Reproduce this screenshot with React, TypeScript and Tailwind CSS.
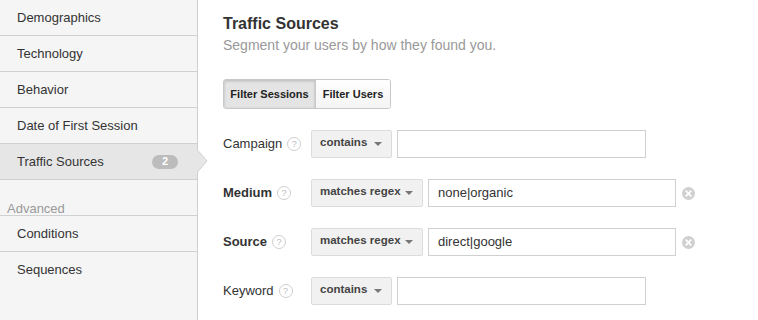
import React from "react";

interface NavItem {
  label: string;
  badge?: string;
  selected?: boolean;
}

const mainItems: NavItem[] = [
  { label: "Demographics" },
  { label: "Technology" },
  { label: "Behavior" },
  { label: "Date of First Session" },
  { label: "Traffic Sources", badge: "2", selected: true },
];

const advancedItems: NavItem[] = [{ label: "Conditions" }, { label: "Sequences" }];

interface FilterRow {
  label: string;
  bold?: boolean;
  op: string;
  value: string;
}

const rows: FilterRow[] = [
  { label: "Campaign", op: "contains", value: "" },
  { label: "Medium", bold: true, op: "matches regex", value: "none|organic" },
  { label: "Source", bold: true, op: "matches regex", value: "direct|google" },
  { label: "Keyword", op: "contains", value: "" },
];

const HelpIcon = () => (
  <span className="inline-flex h-[14px] w-[14px] items-center justify-center rounded-full border border-[#cfcfcf] text-[9px] leading-none text-[#bbb]">
    ?
  </span>
);

const ClearIcon = () => (
  <svg width="13" height="13" viewBox="0 0 13 13">
    <circle cx="6.5" cy="6.5" r="6.5" fill="#d0d0d0" />
    <path d="M4.2 4.2 L8.8 8.8 M8.8 4.2 L4.2 8.8" stroke="#fff" strokeWidth="1.8" strokeLinecap="round" />
  </svg>
);

const SideRow = ({ item, last }: { item: NavItem; last?: boolean }) => (
  <div
    className={`relative flex h-[36px] items-center justify-between pl-[17px] pr-[19px] text-[13px] text-[#333] ${
      last ? "" : "border-b border-[#d0d0d0]"
    } ${item.selected ? "bg-[#e6e6e6]" : ""}`}
  >
    <span>{item.label}</span>
    {item.badge && (
      <span className="flex h-[14px] w-[26px] items-center justify-center rounded-full bg-[#bcbcbc] text-[11px] font-bold leading-none text-white">
        {item.badge}
      </span>
    )}
    {item.selected && (
      <svg className="absolute right-[-11px] top-[6px]" width="11" height="22" viewBox="0 0 11 22">
        <path d="M0 0 L10 11 L0 22 Z" fill="#e6e6e6" />
        <path d="M0.5 0 L10 11 L0.5 22" fill="none" stroke="#cfcfcf" strokeWidth="1" />
      </svg>
    )}
  </div>
);

export default function App() {
  return (
    <div className="flex h-[320px] w-[758px] overflow-hidden bg-white font-['Liberation_Sans',Arial,sans-serif]">
      <div className="w-[198px] shrink-0 border-r border-[#d0d0d0] bg-[#f5f5f5]">
        {mainItems.map((item) => (
          <SideRow key={item.label} item={item} />
        ))}
        <div className="flex h-[36px] items-end border-b border-[#d0d0d0] pb-0 pl-[7px] text-[13px] leading-[13px] text-[#999]">
          Advanced
        </div>
        {advancedItems.map((item, i) => (
          <SideRow key={item.label} item={item} last={i === advancedItems.length - 1} />
        ))}
      </div>

      <div className="flex-1 pl-[25px] pt-[14px]">
        <h1 className="text-[16px] font-bold leading-[20px] text-[#333]">Traffic Sources</h1>
        <p className="mt-[2px] text-[14px] leading-[18px] text-[#999]">Segment your users by how they found you.</p>

        <div className="mt-[25px] inline-flex h-[30px] rounded-[3px] border border-[#c8c8c8] text-[11px] font-bold text-[#222]">
          <button className="w-[92px] rounded-l-[2px] border-r border-[#c8c8c8] bg-[#e4e4e4] shadow-[inset_0_1px_3px_rgba(0,0,0,0.2)]">
            Filter Sessions
          </button>
          <button className="w-[74px] rounded-r-[2px] bg-gradient-to-b from-white to-[#f4f4f4]">Filter Users</button>
        </div>

        <div className="mt-[21px] flex flex-col gap-[21px]">
          {rows.map((r) => (
            <div key={r.label} className="flex h-[28px] items-center">
              <div className="flex w-[88px] items-center gap-[5px]">
                <span className={`text-[13px] text-[#333] ${r.bold ? "font-bold" : ""}`}>{r.label}</span>
                <HelpIcon />
              </div>
              <div
                className={`flex h-[28px] items-center justify-between rounded-[2px] border border-[#dcdcdc] bg-[#f1f1f1] pl-[8px] pr-[9px] text-[11.5px] font-bold text-[#444] ${
                  r.value ? "w-[112px]" : "w-[81px]"
                }`}
              >
                <span className="-mt-[3px]">{r.op}</span>
                <span className="h-0 w-0 border-x-[4px] border-t-[4px] border-x-transparent border-t-[#777]" />
              </div>
              <div
                className={`ml-[5px] flex h-[28px] items-center border border-[#d0d0d0] bg-white px-[9px] text-[13px] text-[#333] ${
                  r.value ? "w-[248px]" : "w-[249px]"
                }`}
              >
                {r.value}
              </div>
              {r.value && (
                <span className="ml-[6px] flex">
                  <ClearIcon />
                </span>
              )}
            </div>
          ))}
        </div>
      </div>
    </div>
  );
}
